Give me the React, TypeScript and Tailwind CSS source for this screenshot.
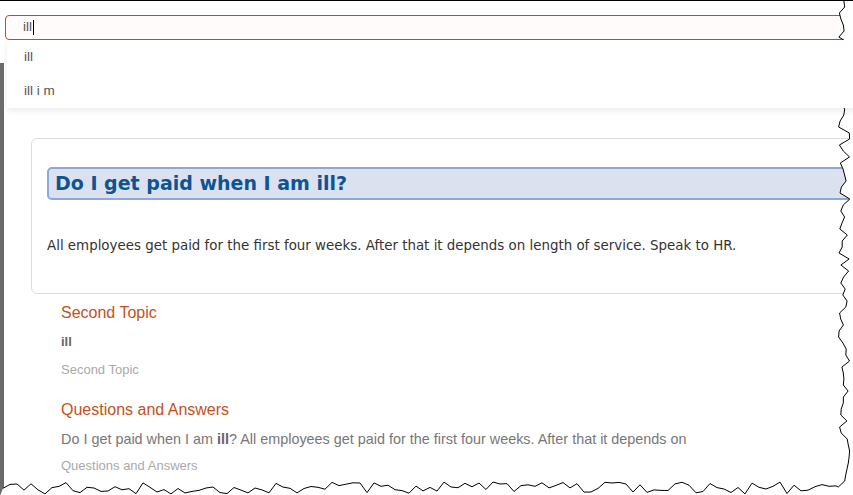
import React from 'react';

const tornPath = () => {
  // deterministic jagged edge along right side and bottom
  let seed = 7;
  const rnd = () => {
    seed = (seed * 9301 + 49297) % 233280;
    return seed / 233280;
  };
  const pts: string[] = [];
  for (let y = 0; y <= 486; y += 6) {
    pts.push(`${(838 + rnd() * 12).toFixed(1)},${y}`);
  }
  for (let x = 836; x >= 0; x -= 7) {
    pts.push(`${x},${(481 + rnd() * 12).toFixed(1)}`);
  }
  return pts;
};

function TornEdge() {
  const pts = tornPath();
  const outline = 'M' + pts.join(' L');
  const fill = outline + ' L0,495 L853,495 L853,0 Z';
  return (
    <svg className="absolute inset-0 pointer-events-none" width="853" height="495" viewBox="0 0 853 495">
      <path d={fill} fill="#ffffff" />
      <path d={outline} fill="none" stroke="#000" strokeWidth="1" />
    </svg>
  );
}

export default function App() {
  return (
    <div className="relative w-[853px] h-[495px] overflow-hidden bg-white border-t border-black font-['Liberation_Sans',Arial,sans-serif]">
      {/* page edge */}
      <div className="absolute left-0 top-[62px] bottom-0 w-[4px] bg-[#6b6b6b]" />

      <div className="w-[880px] flex flex-col">
        {/* Search */}
        <div className="relative mt-[14px] ml-[5px]">
          <div className="h-[25px] border border-[#a5592a] rounded-[4px] bg-[#fffbfa] flex items-center pl-[17px] text-[13.5px] text-[#555]">
            ill<span className="w-px h-[15px] bg-black ml-px" />
          </div>
          <div className="absolute left-[2px] right-0 top-[25px] h-[68px] bg-white shadow-[0_3px_6px_rgba(0,0,0,0.08)] z-10 flex flex-col text-[13.5px] text-[#555]">
            <div className="h-[34px] flex items-center pl-[17px]">ill</div>
            <div className="h-[34px] flex items-center pl-[17px]">ill i m</div>
          </div>
        </div>

        {/* Answer card */}
        <div className="ml-[31px] mt-[98px] h-[156px] border border-[#dcdcdc] rounded-[6px] pt-[28px] pl-[15px] font-['DejaVu_Sans',Verdana,sans-serif]">
          <div className="h-[33px] border-2 border-[#8ea9d5] bg-[#dce1ef] rounded-[5px] flex items-center pl-[6px]">
            <h1 className="text-[19px] font-bold text-[#0e5493]">Do I get paid when I am ill?</h1>
          </div>
          <p className="mt-[36px] text-[13.4px] text-[#333]">All employees get paid for the first four weeks. After that it depends on length of service. Speak to HR.</p>
        </div>

        {/* Results */}
        <div className="ml-[61px] mt-[9px] flex flex-col">
          <div className="text-[16px] text-[#c4511c] leading-[20px]">Second Topic</div>
          <div className="mt-[10px] text-[13px] font-bold text-[#666] leading-[18px]">ill</div>
          <div className="mt-[11px] text-[13px] text-[#aaa] leading-[16px]">Second Topic</div>
          <div className="mt-[22px] text-[16px] text-[#c4511c] leading-[20px]">Questions and Answers</div>
          <div className="mt-[10px] text-[14.4px] text-[#777] leading-[19px]">
            Do I get paid when I am <b className="text-[#666]">ill</b>? All employees get paid for the first four weeks. After that it depends on
          </div>
          <div className="mt-[9px] text-[13px] text-[#aaa] leading-[16px]">Questions and Answers</div>
        </div>
      </div>

      <TornEdge />
    </div>
  );
}
